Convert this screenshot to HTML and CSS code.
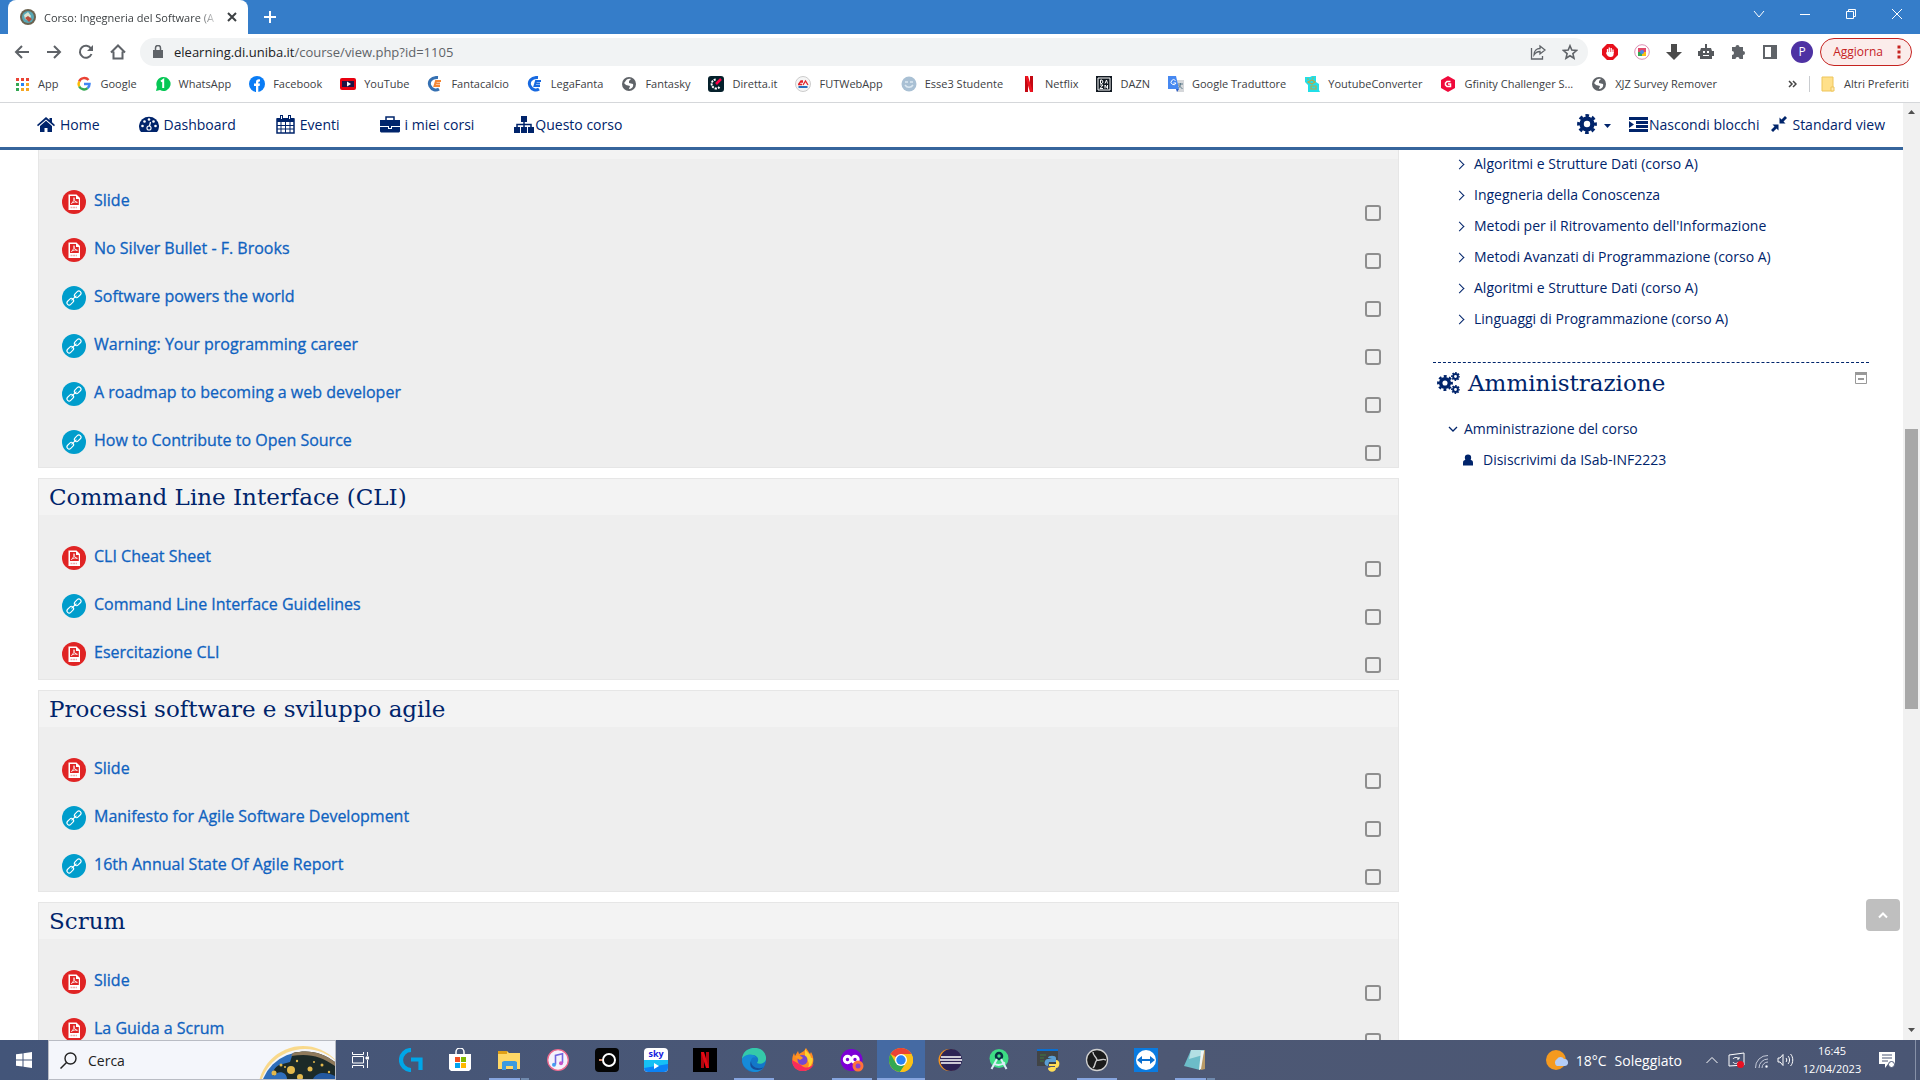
FILE: index.html
```html
<!DOCTYPE html>
<html lang="it">
<head>
<meta charset="utf-8">
<title>Corso: Ingegneria del Software (A)</title>
<link rel="stylesheet" href="styles.css">
</head>
<body>
<svg class="defs" aria-hidden="true">
  <symbol id="pdf" viewBox="0 0 24 24"><circle cx="12" cy="12" r="12" fill="#e02424"/><path d="M6.500 4.500h8L18 8v12H6.500z" fill="#fff"/><path d="M8 6h6v3h2.800v6H8z" fill="#e02424"/><path d="M12 7.500c.5 2-.8 4.500-2.600 6 1.500-1.400 4-1.800 6-1.200-1.800.2-3.400-1.800-3.500-4.500" fill="none" stroke="#fff" stroke-width=".8"/><path d="M8.500 17.500h2m.6 0h2m.6 0H15" stroke="#eaa" stroke-width="1.500"/></symbol>
  <symbol id="link" viewBox="0 0 24 24"><circle cx="12" cy="12" r="12" fill="#009dcc"/><g fill="none" stroke="#fff" stroke-width="1.100" transform="rotate(-45 12 12)"><rect x="3" y="9.800" width="7.500" height="4.400" rx="2.200"/><rect x="13.500" y="9.800" width="7.500" height="4.400" rx="2.200"/><path d="M8.500 12h7"/></g></symbol>
  <symbol id="gear" viewBox="0 0 20 20"><g fill="none" stroke="currentColor"><circle cx="10" cy="10" r="5.400" stroke-width="4.400"/><circle cx="10" cy="10" r="8.400" stroke-width="3" stroke-dasharray="3.600 2.997" stroke-dashoffset="1.800"/></g></symbol>
  <symbol id="globe" viewBox="0 0 16 16"><circle cx="8" cy="8" r="7" fill="#5f6368"/><path d="M4 6c1-3 4-4 6-3l-2 2v2l4 1c1 3-2 5-4 5l1-3-4-1-2-2z" fill="#fff"/></symbol>
  <symbol id="chrome" viewBox="0 0 24 24"><circle cx="12" cy="12" r="12" fill="#fbc116"/><path d="M12 12 1.600 6A12 12 0 0 1 22.400 6z" fill="#ea4335"/><path d="M1.600 6A12 12 0 0 0 11 24l6.200-9L12 12 6.800 15z" fill="#34a853"/><path d="M12 6h10.400A12 12 0 0 1 11 24l6-9z" fill="#fbc116"/><circle cx="12" cy="12" r="6" fill="#fff"/><circle cx="12" cy="12" r="4.700" fill="#2a83f5"/></symbol>
</svg>

<header class="browser">
  <div class="titlebar">
    <div class="tab">
      <svg width="16" height="16" viewBox="0 0 16 16"><circle cx="8" cy="8" r="8" fill="#6b6350"/><circle cx="8" cy="8" r="6" fill="#58a7b5"/><path d="M4 6l4-3 3 4-2 5-4-2z" fill="#d8e4d2"/><path d="M5 9l3-2 4 3-3 3z" fill="#b84b3a"/></svg>
      <span class="tab-title">Corso: Ingegneria del Software (A</span>
      <button class="plain" aria-label="Chiudi scheda"><svg width="10" height="10" viewBox="0 0 10 10"><path d="M1 1l8 8M9 1 1 9" stroke="#3c4043" stroke-width="2"/></svg></button>
    </div>
    <button class="plain new-tab" aria-label="Nuova scheda"><svg width="12" height="12" viewBox="0 0 12 12"><path d="M6 0v12M0 6h12" stroke="#fff" stroke-width="2"/></svg></button>
    <div class="window-buttons">
      <button class="plain" aria-label="Cerca schede"><svg width="12" height="12" viewBox="0 0 12 12"><path d="M1 3l5 6 5-6" class="thin"/></svg></button>
      <button class="plain" aria-label="Riduci"><svg width="12" height="12" viewBox="0 0 12 12"><path d="M1 6.500h10" class="thin"/></svg></button>
      <button class="plain" aria-label="Ripristina"><svg width="12" height="12" viewBox="0 0 12 12"><path d="M1.500 3.500h7v7h-7zM3.500 3V1.500h7v7H9" class="thin"/></svg></button>
      <button class="plain" aria-label="Chiudi"><svg width="12" height="12" viewBox="0 0 12 12"><path d="M1 1l10 10M11 1 1 11" class="thin"/></svg></button>
    </div>
  </div>
  <div class="toolbar">
    <div class="nav-buttons">
      <button class="plain" aria-label="Indietro"><svg width="16" height="16" viewBox="0 0 16 16"><path d="M15 8H2M8 2 2 8l6 6" class="tool"/></svg></button>
      <button class="plain" aria-label="Avanti"><svg width="16" height="16" viewBox="0 0 16 16"><path d="M1 8h13M8 2l6 6-6 6" class="tool"/></svg></button>
      <button class="plain" aria-label="Ricarica"><svg width="16" height="16" viewBox="0 0 16 16"><path d="M13.500 10A6 6 0 1 1 13 4.600" class="tool"/><path d="M15 1v6H9z" fill="#5f6368"/></svg></button>
      <button class="plain" aria-label="Pagina iniziale"><svg width="16" height="16" viewBox="0 0 16 16"><path d="M1 8.500 8 1.500l7 7M3.500 7.500v7h9v-7" class="tool"/></svg></button>
    </div>
    <label class="omnibox">
      <svg width="10" height="13" viewBox="0 0 10 13"><path d="M0 5h10v8H0z" fill="#5f6368"/><path d="M2.500 5V3a2.500 2.500 0 0 1 5 0v2" fill="none" stroke="#5f6368" stroke-width="1.500"/></svg>
      <span class="url">elearning.di.uniba.it<span class="path">/course/view.php?id=1105</span></span>
      <svg width="16" height="16" viewBox="0 0 16 16"><path d="M1.500 4v11h11v-3M10 2l5 4-5 4V7.500c-3 0-4.500 1-6 3.500 0-4 2.500-6.500 6-6.500z" fill="none" stroke="#5f6368" stroke-width="1.300"/></svg>
      <svg width="16" height="16" viewBox="0 0 16 16"><path d="M8 1.800l1.800 4.300 4.700.4-3.600 3.100 1.100 4.600-4-2.500-4 2.500 1.100-4.600-3.600-3.100 4.700-.4z" fill="none" stroke="#5f6368" stroke-width="1.600"/></svg>
    </label>
    <div class="extensions">
      <svg width="16" height="16" viewBox="0 0 16 16"><path d="M5 0h6l5 5v6l-5 5H5l-5-5V5z" fill="#e8101c"/><path d="M5.500 9V5M7.300 8V3.500M9.200 8V4M11 9V5.500" stroke="#fff" stroke-width="1.300"/><path d="M4.900 8h6.700v2c0 2-1 3-3 3-2.500 0-3.500-1.500-4.600-4z" fill="#fff"/></svg>
      <svg width="16" height="16" viewBox="0 0 16 16"><circle cx="8" cy="8" r="7.300" fill="#fff" stroke="#dc8fb4"/><path d="M4 4h8v8H4z" fill="#e04a6a"/><path d="M8 8 4 8v4h5z" fill="#36a852"/><path d="M8 8h4v4H8z" fill="#fbc116"/><circle cx="8" cy="8" r="2" fill="#498af0"/></svg>
      <svg width="16" height="16" viewBox="0 0 16 16"><path d="M5 0h6v8h5l-8 8-8-8h5z" fill="#4b4b4b"/></svg>
      <svg width="16" height="16" viewBox="0 0 16 16"><path d="M7 0h2v4h4l1 3h2v5h-2v3H2v-3H0V7h2l1-3h4z" fill="#55585c"/><path d="M5 7h2v2H5zm4 0h2v2H9zM5 11h6v1H5z" fill="#fff"/></svg>
      <svg width="16" height="16" viewBox="0 0 16 16"><path d="M2 3h3.500a2 2 0 1 1 4 0H13v4a2 2 0 1 1 0 4v4H9.500a2 2 0 1 0-4 0H2v-4a2 2 0 1 0 0-4z" fill="#5f6368"/></svg>
      <svg width="16" height="16" viewBox="0 0 16 16"><path d="M1 1h14v14H1zM3 3v10h6V3z" fill="#5f6368" fill-rule="evenodd"/></svg>
      <button class="plain avatar">P</button>
    </div>
    <button class="update">Aggiorna<svg width="4" height="14" viewBox="0 0 4 14"><path d="M.5.500h3v3h-3zm0 5h3v3h-3zm0 5h3v3h-3z" fill="#c5221f"/></svg></button>
  </div>
  <nav class="bookmarks">
    <a href="#"><svg class="ic" viewBox="0 0 16 16"><path d="M2 2h3v3H2zm5 0h3v3H7zm5 0h3v3h-3z" fill="#ea4335"/><path d="M2 7h3v3H2zM2 12h3v3H2z" fill="#34a853"/><path d="M7 7h3v3H7z" fill="#2483f5"/><path d="M12 7h3v3h-3zM7 12h3v3H7zm5 0h3v3h-3z" fill="#f5a623"/></svg>App</a>
    <a href="#"><svg class="ic" viewBox="0 0 16 16" fill="none" stroke-width="2.500"><path d="M12.500 4A5.500 5.500 0 0 0 3.200 5.500" stroke="#ea4335"/><path d="M3.200 5.500a5.500 5.500 0 0 0 0 5" stroke="#fbbc05"/><path d="M3.200 10.500a5.500 5.500 0 0 0 8.400 1.600" stroke="#34a853"/><path d="M11.600 12.100A5.500 5.500 0 0 0 13.500 8H8" stroke="#4285f4"/></svg>Google</a>
    <a href="#"><svg class="ic" viewBox="0 0 16 16"><path d="M8 1a7 7 0 1 1-3 13l-4 1 1-4A7 7 0 0 1 8 1" fill="#06c755"/><path d="M6 5.500 8.200 4v8" fill="none" stroke="#fff" stroke-width="2"/></svg>WhatsApp</a>
    <a href="#"><svg class="ic" viewBox="0 0 16 16"><circle cx="8" cy="8" r="8" fill="#0a7cf5"/><path d="M7 16v-6H5V7.500h2V6c0-2 1.500-3 4-2.600v2C9.500 5.300 9.300 5.800 9.300 7.500H11L10.600 10H9.300v6z" fill="#fff"/></svg>Facebook</a>
    <a href="#"><svg class="ic" viewBox="0 0 16 16"><rect y="2" width="16" height="12" rx="2" fill="#e8000f"/><path d="M2 5h12v6H2z" fill="#1c1445"/><path d="M7 5.500v5L11 8z" fill="#fff"/></svg>YouTube</a>
    <a href="#"><svg class="ic" viewBox="0 0 16 16" fill="none"><path d="M11 1.500C4 1 1 6 3 10s6 5 9 3" stroke="#3570b2" stroke-width="3"/><path d="M14 5H9L7.500 10H13M8 7.500h5" stroke="#f58634" stroke-width="2"/></svg>Fantacalcio</a>
    <a href="#"><svg class="ic" viewBox="0 0 16 16" fill="none" stroke="#1769e0"><path d="M11 1.500C4 1 1 6 3 10s6 5 9 3" stroke-width="3"/><path d="M14 5H9L7.500 10H13M8 7.500h5" stroke-width="2"/></svg>LegaFanta</a>
    <a href="#"><svg class="ic"><use href="#globe"/></svg>Fantasky</a>
    <a href="#"><svg class="ic" viewBox="0 0 16 16"><rect width="16" height="16" rx="3" fill="#05202b"/><path d="M11.500 11A4.500 4.500 0 1 1 8 3.500" fill="none" stroke="#fff" stroke-width="2" stroke-dasharray="2 1"/><path d="M8 8l5-5" stroke="#ff0046" stroke-width="2.500"/></svg>Diretta.it</a>
    <a href="#"><svg class="ic" viewBox="0 0 16 16"><circle cx="8" cy="8" r="7.500" fill="#f5f5f5" stroke="#ccc"/><path d="M3 8.500h4M5 6h3M3.500 8.500 6 5h2M8 9l2.500-4L13 9" fill="none" stroke="#e3232b" stroke-width="1.300"/><path d="M3.500 11h9" stroke="#2870c0" stroke-width="2"/></svg>FUTWebApp</a>
    <a href="#"><svg class="ic" viewBox="0 0 16 16"><circle cx="8" cy="8" r="7.500" fill="#a9c0d4"/><path d="M4 6h3m2 0h3M4 9c2 3 6 3 8 0" fill="none" stroke="#dce8f1" stroke-width="1.500"/></svg>Esse3 Studente</a>
    <a href="#"><svg class="ic" viewBox="0 0 16 16"><path d="M4 0h3v16H4zm5 0h3v16H9z" fill="#c40812"/><path d="M4 0h3l5 16H9z" fill="#ee1420"/></svg>Netflix</a>
    <a href="#"><svg class="ic" viewBox="0 0 16 16"><path d="M0 0h16v16H0z" fill="#101820"/><path d="M2 2h12v12H2z" fill="none" stroke="#fff"/><path d="M4.500 4v3.500H6L7 6 6 4zM9 7.500l1.500-3.500 1 3.500M4 9h3l-3 3.500h3M9 12.500V9l2.500 3.500V9" fill="none" stroke="#fff"/></svg>DAZN</a>
    <a href="#"><svg class="ic" viewBox="0 0 16 16"><path d="M7 4h9v12H9z" fill="#d5d7da"/><path d="M0 0h8l3 13H0z" fill="#4688f1"/><path d="M7.500 4.500A2.500 2.500 0 1 0 8 7H5.500" fill="none" stroke="#fff"/><path d="M10 8h5m-2.500-1v1c0 2-1 3-2 4m0-3 4 4" fill="none" stroke="#607d8b"/><path d="M8 13h3l-2 3z" fill="#2457c5"/></svg>Google Traduttore</a>
    <a href="#"><svg class="ic" viewBox="0 0 16 16"><path d="M1 1h5l2-1h4v6l3 2v6l1 2H4V9L1 6z" fill="#20dfe8"/><path d="M3 3h2m3-1h2M4 6l4-2 3 2-3 2zM7 10h5v3H7z" fill="none" stroke="#b8a848" stroke-width="1.200"/></svg>YoutubeConverter</a>
    <a href="#"><svg class="ic" viewBox="0 0 16 16"><path d="M8 0l7 4v8l-7 4-7-4V4z" fill="#f00a3c"/><path d="M10.500 5.500H7L5.500 7v2L7 10.500h3.500V8H8" fill="none" stroke="#fff" stroke-width="1.500"/></svg>Gfinity Challenger S...</a>
    <a href="#"><svg class="ic"><use href="#globe"/></svg>XJZ Survey Remover</a>
    <a href="#" class="more" aria-label="Altri preferiti nascosti"><svg width="9" height="8" viewBox="0 0 9 8"><path d="M1 1l3 3-3 3M5 1l3 3-3 3" fill="none" stroke="#444" stroke-width="1.500"/></svg></a>
    <a href="#" class="others"><svg class="ic" viewBox="0 0 16 16"><path d="M2 1h11v14H2z" fill="#ffe08a" stroke="#eec55a"/><path d="M11 11h3v4h-3z" fill="#ffe9ae" stroke="#eec55a"/></svg>Altri Preferiti</a>
  </nav>
</header>

<div class="viewport">
  <div class="site">
    <nav class="sitenav">
      <a href="#"><svg width="18" height="16" viewBox="0 0 18 16"><path d="M9 1 0 9l1 1.200L9 3.400l8 6.800L18 9l-3-2.700V2h-2.500v2z" fill="#00246b"/><path d="M9 4.800 3 10v6h4.500v-4h3v4H15v-6z" fill="#00246b"/></svg><span>Home</span></a>
      <a href="#" class="g1"><svg width="20" height="16" viewBox="0 0 20 16"><path d="M2 16A10 9.500 0 1 1 18 16z" fill="#00246b"/><g fill="#fff"><circle cx="3.500" cy="10" r="1.300"/><circle cx="5.500" cy="5.500" r="1.300"/><circle cx="10" cy="3.500" r="1.300"/><circle cx="14.500" cy="5.500" r="1.300"/><circle cx="16.500" cy="10" r="1.300"/><circle cx="10" cy="12" r="2.600"/></g><path d="M10 12l1.500-6" stroke="#fff" stroke-width="1.300"/><circle cx="10" cy="12" r="1.500" fill="#00246b"/></svg><span>Dashboard</span></a>
      <a href="#" class="g2"><svg width="19" height="19" viewBox="0 0 19 19"><path d="M1 4h17v14H1z" fill="#fff" stroke="#00246b" stroke-width="1.500"/><path d="M1 3h17v4H1zM4 0h3v5H4zm8 0h3v5h-3z" fill="#00246b"/><path d="M5 7v11m4.500-11v11M14 7v11M1 10.500h17M1 14h17" stroke="#00246b"/><path d="M5.500 1v3m8-3v3" stroke="#fff"/></svg><span>Eventi</span></a>
      <a href="#" class="g3"><svg width="20" height="17" viewBox="0 0 20 17"><path d="M0 4h20v6H0zm0 7h8v2h4v-2h8v4.500l-1 1H1l-1-1z" fill="#00246b"/><path d="M6 4V1h8v3" fill="none" stroke="#00246b" stroke-width="1.500"/><path d="M9 10h2v2H9z" fill="#00246b"/></svg><span>i miei corsi</span></a>
      <a href="#" class="g4"><svg width="20" height="17" viewBox="0 0 20 17"><path d="M7 0h6v6H7zM0 11h6v6H0zm7 0h6v6H7zm7 0h6v6h-6z" fill="#00246b"/><path d="M10 5v7M3 12V8.500h14V12" fill="none" stroke="#00246b" stroke-width="1.500"/></svg><span>Questo corso</span></a>
      <button class="plain settings" aria-label="Impostazioni"><svg width="20" height="20"><use href="#gear"/></svg><svg width="7" height="4" viewBox="0 0 7 4"><path d="M0 0h7L3.500 4z" fill="#00246b"/></svg></button>
      <a href="#" class="g5"><svg width="19" height="15" viewBox="0 0 19 15"><path d="M0 0h19v3H0zm7 4h12v3H7zm0 4h12v3H7zm-7 4h19v3H0zM0 4l5 3.500L0 11z" fill="#00246b"/></svg><span>Nascondi blocchi</span></a>
      <a href="#" class="g6"><svg width="16" height="16" viewBox="0 0 16 16"><path d="M8.500 7.500V1.500l2 2L14 0l2 2-3.500 3.500 2 2zM7.500 8.500v6l-2-2L2 16l-2-2 3.500-3.500-2-2z" fill="#00246b"/></svg><span>Standard view</span></a>
    </nav>
    <div class="content">
      <main>
        <section class="continued">
          <div class="cut-heading"></div>
          <ul>
            <li><svg><use href="#pdf"/></svg><a href="#">Slide</a><input type="checkbox" aria-label="Slide"></li>
            <li><svg><use href="#pdf"/></svg><a href="#">No Silver Bullet - F. Brooks</a><input type="checkbox" aria-label="No Silver Bullet - F. Brooks"></li>
            <li><svg><use href="#link"/></svg><a href="#">Software powers the world</a><input type="checkbox" aria-label="Software powers the world"></li>
            <li><svg><use href="#link"/></svg><a href="#">Warning: Your programming career</a><input type="checkbox" aria-label="Warning: Your programming career"></li>
            <li><svg><use href="#link"/></svg><a href="#">A roadmap to becoming a web developer</a><input type="checkbox" aria-label="A roadmap to becoming a web developer"></li>
            <li><svg><use href="#link"/></svg><a href="#">How to Contribute to Open Source</a><input type="checkbox" aria-label="How to Contribute to Open Source"></li>
          </ul>
        </section>
        <section>
          <h3>Command Line Interface (CLI)</h3>
          <ul>
            <li><svg><use href="#pdf"/></svg><a href="#">CLI Cheat Sheet</a><input type="checkbox" aria-label="CLI Cheat Sheet"></li>
            <li><svg><use href="#link"/></svg><a href="#">Command Line Interface Guidelines</a><input type="checkbox" aria-label="Command Line Interface Guidelines"></li>
            <li><svg><use href="#pdf"/></svg><a href="#">Esercitazione CLI</a><input type="checkbox" aria-label="Esercitazione CLI"></li>
          </ul>
        </section>
        <section>
          <h3>Processi software e sviluppo agile</h3>
          <ul>
            <li><svg><use href="#pdf"/></svg><a href="#">Slide</a><input type="checkbox" aria-label="Slide"></li>
            <li><svg><use href="#link"/></svg><a href="#">Manifesto for Agile Software Development</a><input type="checkbox" aria-label="Manifesto for Agile Software Development"></li>
            <li><svg><use href="#link"/></svg><a href="#">16th Annual State Of Agile Report</a><input type="checkbox" aria-label="16th Annual State Of Agile Report"></li>
          </ul>
        </section>
        <section>
          <h3>Scrum</h3>
          <ul>
            <li><svg><use href="#pdf"/></svg><a href="#">Slide</a><input type="checkbox" aria-label="Slide"></li>
            <li><svg><use href="#pdf"/></svg><a href="#">La Guida a Scrum</a><input type="checkbox" aria-label="La Guida a Scrum"></li>
          </ul>
        </section>
      </main>
      <aside>
        <ul class="courses">
          <li><a href="#">Algoritmi e Strutture Dati (corso A)</a></li>
          <li><a href="#">Ingegneria della Conoscenza</a></li>
          <li><a href="#">Metodi per il Ritrovamento dell'Informazione</a></li>
          <li><a href="#">Metodi Avanzati di Programmazione (corso A)</a></li>
          <li><a href="#">Algoritmi e Strutture Dati (corso A)</a></li>
          <li><a href="#">Linguaggi di Programmazione (corso A)</a></li>
        </ul>
        <div class="admin">
          <div class="admin-head">
            <svg width="23" height="22" viewBox="0 0 23 22" color="#00246b"><svg x="0" y="3" width="16" height="16"><use href="#gear"/></svg><svg x="14" y="0" width="9" height="9" viewBox="0 0 20 20"><use href="#gear" width="20" height="20"/></svg><svg x="14" y="13" width="9" height="9" viewBox="0 0 20 20"><use href="#gear" width="20" height="20"/></svg></svg>
            <h2>Amministrazione</h2>
            <button class="plain collapse" aria-label="Nascondi Amministrazione"><svg width="12" height="12" viewBox="0 0 12 12"><path d="M.5.500h11v11H.5z" fill="#fff" stroke="#999"/><path d="M0 0h12v3H0zM3 6h6v2H3z" fill="#999"/></svg></button>
          </div>
          <p class="node"><svg width="10" height="6" viewBox="0 0 10 6"><path d="M1 1l4 4 4-4" fill="none" stroke="#00246b" stroke-width="1.300"/></svg>Amministrazione del corso</p>
          <p class="leaf"><svg width="10" height="12" viewBox="0 0 11 12"><path d="M0 12V9c0-2 1-3 2.500-3h6C10 6 11 7 11 9v3z" fill="#00246b"/><circle cx="5.500" cy="3.500" r="3.500" fill="#00246b"/></svg><a href="#">Disiscrivimi da ISab-INF2223</a></p>
        </div>
      </aside>
    </div>
    <button class="to-top" aria-label="Torna su"><svg width="10" height="7" viewBox="0 0 10 7"><path d="M1 5.500l4-4 4 4" fill="none" stroke="#fff" stroke-width="2"/></svg></button>
  </div>
  <div class="scrollbar">
    <svg width="7" height="4" viewBox="0 0 7 4"><path d="M0 4h7L3.500 0z" fill="#505050"/></svg>
    <div class="track"><div class="thumb"></div></div>
    <svg width="7" height="4" viewBox="0 0 7 4"><path d="M0 0h7L3.500 4z" fill="#505050"/></svg>
  </div>
</div>

<footer class="taskbar">
  <button class="start" aria-label="Start"><svg width="16" height="16" viewBox="0 0 16 16"><path d="M0 2.300 6.500 1.400v6.100H0zM7.500 1.200 16 0v7.500H7.500zM0 8.500h6.500v6.100L0 13.700zM7.500 8.500H16V16l-8.500-1.200z" fill="#fff"/></svg></button>
  <div class="search">
    <svg width="17" height="17" viewBox="0 0 17 17"><circle cx="10.500" cy="6.500" r="5.500" fill="none" stroke="#222" stroke-width="1.400"/><path d="M6.500 10.500.500 16.500" stroke="#222" stroke-width="1.500"/></svg>
    <input type="text" placeholder="Cerca" aria-label="Cerca">
    <svg class="earth" width="78" height="38" viewBox="0 0 78 38"><circle cx="46" cy="50" r="45" fill="#f9d98c"/><circle cx="48" cy="54" r="46" fill="#f4f6fb"/><circle cx="46" cy="54" r="43" fill="#2f6ebb"/><path d="M36 12c16-4 30 0 42 9v17H30c0-5-5-8-10-6l-4 3c-1-4 2-9 6-11l11-3z" fill="#1c2a28"/><path d="M36 12c16-4 30 0 42 9v4C64 15 52 12 34 15z" fill="#8f7a5c"/><path d="M56 38c4-8 14-7 22-3v3z" fill="#2459a0"/><g fill="#e4b94c"><circle cx="34" cy="29" r="4"/><circle cx="53" cy="28" r="2.500"/><circle cx="43" cy="36" r="3"/><circle cx="17" cy="32" r="2.500"/><circle cx="24" cy="24" r="1.500"/><circle cx="40" cy="20" r="1.200"/><circle cx="65" cy="24" r="1.500"/><circle cx="72" cy="31" r="1.200"/><circle cx="57" cy="21" r="1"/><circle cx="28" cy="26" r="1"/></g></svg>
  </div>
  <div class="apps">
    <button aria-label="Visualizzazione attività"><svg width="17" height="16" viewBox="0 0 17 16" fill="none" stroke="#fff"><path d="M.5 0v2.500h11V0M.5 16v-2.500h11V16M.5 4.500h11v6.500H.5zM15.500 0v4m0 4v8"/><path d="M14 5h3v2h-3z" fill="#fff"/></svg></button>
    <button class="first-app" aria-label="Logitech G HUB"><svg class="app" viewBox="0 0 24 24"><path d="M12 2A10 10 0 1 0 12 22M12 11.500h9.500V22" fill="none" stroke="#00a6e8" stroke-width="4.200"/></svg></button>
    <button aria-label="Microsoft Store"><svg class="app" viewBox="0 0 24 24"><path d="M8 7V4a4 4 0 0 1 8 0v3" fill="none" stroke="#fff" stroke-width="1.500"/><path d="M1 6h22v15l-2 2H3l-2-2z" fill="#fff"/><path d="M7 9h5v5H7z" fill="#f25022"/><path d="M13 9h5v5h-5z" fill="#7fba00"/><path d="M7 15h5v5H7z" fill="#00a4ef"/><path d="M13 15h5v5h-5z" fill="#ffb900"/></svg></button>
    <button class="open multi" aria-label="Esplora file"><svg class="app" viewBox="0 0 24 24"><path d="M1 3h9l2 2h11v16H1z" fill="#ffd866"/><path d="M1 3h9v3H1z" fill="#e0a016"/><path d="M5 22v-8l2-1h11l2 1v8h-4v-4H9v4z" fill="#3c9be0"/></svg></button>
    <button aria-label="iTunes"><svg class="app" viewBox="0 0 24 24"><circle cx="12" cy="12" r="10.300" fill="#f4f2fb" stroke="#ef6a8f" stroke-width="1.300"/><path d="M9.500 16.500V7.500l7-1.700V15" fill="none" stroke="#7166e0" stroke-width="1.600"/><circle cx="8" cy="16.700" r="2" fill="#469df0"/><circle cx="15" cy="15.300" r="2" fill="#c755c8"/></svg></button>
    <button aria-label="Camera"><svg class="app" viewBox="0 0 24 24"><rect width="24" height="24" rx="4" fill="#050505"/><circle cx="14" cy="12" r="6" fill="none" stroke="#fff" stroke-width="2"/><path d="M4 11h3v2H4z" fill="#d99070"/></svg></button>
    <button aria-label="Sky Go"><svg class="app" viewBox="0 0 24 24"><rect width="24" height="24" rx="4" fill="#fff"/><path d="M0 12h24v8a4 4 0 0 1-4 4H4a4 4 0 0 1-4-4z" fill="#0b82f5"/><path d="M0 12h24v4L0 20z" fill="#16c1f5"/><path d="M10 15v6l5-3z" fill="#fff"/><text x="12" y="9" text-anchor="middle" class="sky">sky</text></svg></button>
    <button aria-label="Netflix"><svg class="app" viewBox="0 0 24 24"><path d="M0 0h24v24H0z" fill="#000"/><path d="M8 4h3v16H8zm5 0h3v16h-3z" fill="#b20710"/><path d="M8 4h3l5 16h-3z" fill="#e50914"/></svg></button>
    <button class="open" aria-label="Edge"><svg class="app" viewBox="0 0 24 24"><circle cx="12" cy="12" r="12" fill="#1377c9"/><path d="M0 11C1-3 22-4 24 9c1 6-6 8-9 6 3-4 0-8-5-8-4 0-8 1-10 4" fill="#35c9a9"/><path d="M0 12C1 6 12 4 14 10c-3-2-6 1-5 5 1 5 8 7 13 4-3 5-9 6-13 4C4 21 0 17 0 12" fill="#168bd8"/><path d="M9 13c0 6 7 9 13 6l-2 2c-4 2-9 1-11-2-1-2-1-4 0-6" fill="#164d9a"/></svg></button>
    <button aria-label="Firefox"><svg class="app" viewBox="0 0 24 24"><path d="M13 3l2-3c2 3 3 4 4 6l1-2c5 8 2 19-8 19C2 23-1 13 3 5l1 3 3-5 1 3z" fill="#ff8a22"/><path d="M14 0c0 4 6 5 6 10 4-2 1 12-8 13 7-2 8-9 2-13z" fill="#ffd12f"/><path d="M1 12c0 14 18 14 22 4-4 4-9 5-13 1z" fill="#f72c5b"/><circle cx="11.500" cy="12" r="5" fill="#7548cf"/><path d="M4 9c3-3 6-1 8 1l-3 2z" fill="#ff9b20"/></svg></button>
    <button class="open" aria-label="Firefox privato"><svg class="app" viewBox="0 0 24 24"><circle cx="11.500" cy="12" r="11" fill="#7d00d5"/><circle cx="7.500" cy="11.500" r="3.200" fill="none" stroke="#fff" stroke-width="3"/><circle cx="15" cy="11.500" r="3.200" fill="none" stroke="#fff" stroke-width="3"/><circle cx="18" cy="18" r="5.500" fill="#ff7139"/><circle cx="18" cy="18" r="2.500" fill="#8b3fd1"/></svg></button>
    <button class="open active" aria-label="Chrome"><svg class="app"><use href="#chrome"/></svg></button>
    <button aria-label="Eclipse"><svg class="app" viewBox="0 0 24 24"><circle cx="11.500" cy="12" r="11" fill="#f7941e"/><circle cx="13" cy="12" r="11" fill="#2c2255"/><path d="M3 9h20M2 12h22M3 15h20" stroke="#fff" stroke-width="1.600"/></svg></button>
    <button aria-label="Android Studio"><svg class="app" viewBox="0 0 24 24"><circle cx="12" cy="10.500" r="9.500" fill="#3ddc84"/><circle cx="12" cy="8" r="3" fill="none" stroke="#073042" stroke-width="2.500"/><path d="M10 11 4.500 21M14 11l5.500 10M7 15.500c3 2 7 2 11-1" fill="none" stroke="#dceef7" stroke-width="2"/></svg></button>
    <button aria-label="Python"><svg class="app" viewBox="0 0 24 24"><path d="M1 1h21v17H1z" fill="#414446"/><path d="M1 1h21v2H1z" fill="#0a6ed1"/><path d="M4 7h6M4 10h4M4 13h4" stroke="#3f7a3f"/><path d="M12 10c0-3 8-3 8 0v4h-7l-1 4c-5 0-4-7 0-7h4z" fill="#5a9fd4"/><path d="M15 19h4v-1h-6v-2h7v-4c5 0 4 8 0 8 0 5-8 5-8 0z" fill="#ffde57"/></svg></button>
    <button class="open" aria-label="OBS"><svg class="app" viewBox="0 0 24 24"><circle cx="12" cy="12" r="10.500" fill="#1b1b1b" stroke="#d0d0d0" stroke-width="1.300"/><path d="M12 12c-1-4-4-4-4-8m4 8c4 1 5-2 9 0m-9 0c-3 3-1 5-4 8" fill="none" stroke="#c8c8c8" stroke-width="1.400"/></svg></button>
    <button aria-label="TeamViewer"><svg class="app" viewBox="0 0 24 24"><path d="M0 0h24v24H0z" fill="#0a7be0"/><circle cx="12" cy="12" r="10" fill="#fff"/><path d="M3 12l5-4v3h8V8l5 4-5 4v-3H8v3z" fill="#0a6fd0"/></svg></button>
    <button class="open multi" aria-label="Blocco note"><svg class="app" viewBox="0 0 24 24"><path d="M8 2h14v19l-4 1z" fill="#b99a66"/><path d="M8 2h13l-4 20L1 18z" fill="#6cbcc8"/><path d="M8 2h13l-1 5-14 4z" fill="#b3e0e4"/><path d="M18 3h3l-3 18-2 1z" fill="#f3f6f5"/></svg></button>
  </div>
  <div class="tray">
    <button class="weather"><svg width="22" height="20" viewBox="0 0 22 20"><circle cx="10" cy="10" r="10" fill="#f59a1f"/><path d="M11 19a4 4 0 0 1 0-7 4 4 0 0 1 7 0 3.500 3.500 0 0 1 1 7z" fill="#b4cdf7" transform="translate(0 -3)"/></svg><span>18°C</span><span>Soleggiato</span></button>
    <svg width="12" height="8" viewBox="0 0 12 8"><path d="M.5 7 6 1.500 11.500 7" class="thin"/></svg>
    <svg class="t1" width="17" height="16" viewBox="0 0 17 16"><path d="M1 3l15-2v12L1 14z" class="thin"/><path d="M5 7c1-2 5-2 6 0m0-2v2H9M5 10c1 2 4 2 5 0" class="thin"/><circle cx="12.500" cy="12.500" r="3.500" fill="#e81123"/></svg>
    <svg class="t2" width="13" height="13" viewBox="0 0 13 13" fill="none" stroke="#c3c9d8"><path d="M.5 13A12 12 0 0 1 13 .500M4 13a9 9 0 0 1 9-9M7 13a6 6 0 0 1 6-6"/><circle cx="11.500" cy="11.500" r="1" fill="#fff"/></svg>
    <svg class="t3" width="17" height="14" viewBox="0 0 17 14"><path d="M1 5h2l3-3.500v11L3 9H1zM9 5c1 1 1 3 0 4m2-6c2 2 2 6 0 8m2.500-10c3 3 3 9 0 12" class="thin"/></svg>
    <div class="clock"><span>16:45</span><span>12/04/2023</span></div>
    <button class="notes" aria-label="Notifiche"><svg width="16" height="16" viewBox="0 0 16 16"><path d="M0 0h16v12H9l-3 4v-4H0z" fill="#fff"/><path d="M3 3h10M3 6h10M3 9h6" stroke="#4a5674"/><circle cx="12.500" cy="12.500" r="3" fill="#fff" stroke="#4a5674"/></svg></button>
    <div class="peek"></div>
  </div>
</footer>
</body>
</html>
```
FILE: styles.css
```css
* { box-sizing: border-box; }
body {
  margin: 0;
  height: 100vh;
  display: flex;
  flex-direction: column;
  overflow: hidden;
  font-family: "Open Sans", "Noto Sans", sans-serif;
  font-size: 14px;
  color: #00246b;
  background: #fff;
}
a { color: inherit; text-decoration: none; }
svg { display: block; flex: none; }
ul { list-style: none; margin: 0; padding: 0; }
button { font-family: inherit; cursor: pointer; }
.defs { position: absolute; width: 0; height: 0; }
.plain { border: 0; padding: 0; background: none; display: flex; align-items: center; justify-content: center; }
.thin { fill: none; stroke: #fff; stroke-width: 1; }
.tool { fill: none; stroke: #5f6368; stroke-width: 2; }
.ic { width: 16px; height: 16px; }

/* Browser frame */
.browser { flex: none; font-size: 12px; color: #3c4043; border-bottom: 1px solid #d5d7da; }
.titlebar { height: 34px; background: #357dc9; display: flex; align-items: center; padding-left: 8px; }
.tab {
  width: 240px; height: 34px; background: #fff; border-radius: 8px 8px 0 0;
  display: flex; align-items: center; gap: 8px; padding: 0 11px 0 12px;
}
.tab-title {
  flex: 1; min-width: 0; overflow: hidden; white-space: nowrap; font-size: 11px;
  mask-image: linear-gradient(to right, #000 88%, transparent);
}
.new-tab { margin-left: 16px; }
.window-buttons { margin-left: auto; display: flex; padding-bottom: 6px; }
.window-buttons .plain { width: 46px; height: 28px; }
.toolbar { height: 35px; display: flex; align-items: center; padding: 0 8px 0 14px; }
.nav-buttons { display: flex; gap: 16px; margin-right: 14px; }
.omnibox {
  flex: 1; height: 28px; border-radius: 14px; background: #f1f3f4;
  display: flex; align-items: center; gap: 16px; padding: 0 10px 0 13px;
}
.url { flex: 1; font-size: 13px; color: #202124; margin-left: -5px; }
.path { color: #5f6368; }
.extensions { display: flex; align-items: center; gap: 16px; margin: 0 7px 0 14px; }
.avatar { width: 22px; height: 22px; border-radius: 50%; background: #4e32a3; color: #fff; font-size: 12px; margin-left: -3px; }
.update {
  height: 28px; border: 1px solid #c5221f; border-radius: 14px; background: #fbeceb; color: #c5221f;
  font-size: 12px; padding: 0 10px 0 12px; display: flex; align-items: center; gap: 14px;
}
.bookmarks { height: 33px; display: flex; align-items: center; gap: 18px; padding: 0 11px 4px 14px; font-size: 11px; white-space: nowrap; }
.bookmarks a { display: flex; align-items: center; gap: 8px; }
.bookmarks .more { margin-left: auto; }
.bookmarks .others { border-left: 1px solid #c9ccd0; padding-left: 10px; margin-left: -6px; }

/* Page */
.viewport { flex: 1; min-height: 0; display: flex; }
.site { flex: 1; min-width: 0; display: flex; flex-direction: column; position: relative; overflow: hidden; }
.sitenav { flex: none; height: 47px; border-bottom: 3px solid #36659c; display: flex; align-items: center; padding: 0 18px 2px 37px; white-space: nowrap; }
.sitenav a { display: flex; align-items: center; gap: 5px; }
.sitenav .g1 { margin-left: 39px; }
.sitenav .g2, .sitenav .g3, .sitenav .g4 { margin-left: 40px; }
.sitenav .g4, .sitenav .g5 { gap: 1px; }
.settings { margin-left: auto; gap: 7px; color: #00246b; }
.settings svg:last-child { margin-top: 4px; }
.sitenav .g5 { margin-left: 18px; }
.sitenav .g6 { margin-left: 12px; }
.content { display: grid; grid-template-columns: minmax(0, 1fr) 436px; gap: 34px; padding: 0 34px 0 38px; }
section { border: 1px solid #e6e6e6; background: #eee; margin-bottom: 10px; }
.continued { border-top: 0; }
.cut-heading { height: 9px; background: #f3f3f3; }
h3, h2 { margin: 0; font-family: "DejaVu Serif", serif; font-weight: 400; font-size: 23px; color: #00246b; }
h3 { height: 36px; line-height: 37px; padding-left: 10px; background: #f3f3f3; }
main ul { padding: 19px 17px 1px 23px; }
main li { height: 48px; display: flex; align-items: center; gap: 8px; }
main li svg { width: 24px; height: 24px; }
main li a { color: #0f62c0; font-size: 16px; flex: 1; padding-bottom: 4px; -webkit-text-stroke: 0.3px #0f62c0; }
main input {
  appearance: none; width: 16px; height: 16px; margin: 0 0 5px; align-self: flex-end;
  border: 2px solid #8e8e8e; border-radius: 3px; background: #efefef;
}
.courses { padding-bottom: 28px; }
.courses li { height: 31px; line-height: 28px; padding-left: 41px; position: relative; }
.courses li::before {
  content: ""; position: absolute; left: 23px; top: 11px; width: 6px; height: 6px;
  border: solid #00246b; border-width: 1px 1px 0 0; transform: rotate(45deg);
}
.admin { border-top: 1px dashed #00246b; margin-top: -2px; }
.admin-head { display: flex; align-items: center; gap: 8px; padding-left: 4px; height: 40px; }
.collapse { margin: 0 2px 10px auto; }
.node, .leaf { margin: 0; height: 31px; display: flex; align-items: center; }
.node { margin-top: 10px; padding-left: 15px; gap: 6px; }
.leaf { padding-left: 30px; gap: 10px; }
.to-top {
  position: absolute; right: 3px; bottom: 109px; width: 34px; height: 32px; border: 0; border-radius: 4px;
  background: #bfbfbf; display: flex; align-items: center; justify-content: center;
}
.scrollbar { width: 17px; background: #f1f1f1; display: flex; flex-direction: column; align-items: center; padding: 7px 0 8px; }
.track { flex: 1; align-self: stretch; padding: 0 2px; }
.thumb { margin-top: 315px; height: 280px; background: #a8a8a8; }

/* Taskbar */
.taskbar { flex: none; height: 40px; display: flex; background: linear-gradient(90deg, #435579, #4d5874 60%, #4a5674); color: #fff; }
.taskbar button { border: 0; background: none; color: inherit; display: flex; align-items: center; justify-content: center; padding: 0; }
.taskbar .start { width: 48px; }
.search { width: 288px; background: #f4f6fb; border: 1px solid #b9bcc4; display: flex; align-items: center; padding-left: 11px; overflow: hidden; }
.search input { flex: 1; min-width: 0; border: 0; background: none; outline: 0; font: 14px "Open Sans", sans-serif; color: #222; padding: 0 0 0 11px; }
.search input::placeholder { color: #222; opacity: 1; }
.apps { display: flex; gap: 1px; }
.apps button { width: 48px; height: 40px; }
.apps .first-app { margin-left: 2px; }
.app { width: 24px; height: 24px; }
.apps .open { background: linear-gradient(#86a5df, #86a5df) center bottom / 40px 2px no-repeat; }
.apps .multi { background: linear-gradient(90deg, #86a5df 31px, #4d5874 31px, #4d5874 32px, #6f89ad 32px) center bottom / 40px 2px no-repeat; }
.apps .active { background: linear-gradient(#86a5df, #86a5df) center bottom / 100% 2px no-repeat, #456aa3; }
.sky { font: bold 9px "Open Sans", sans-serif; fill: #1522e0; }
.tray { margin-left: auto; display: flex; align-items: center; white-space: nowrap; }
.tray .weather { font-size: 14px; gap: 8px; margin-right: 24px; }
.t1 { margin-left: 10px; }
.t2 { margin-left: 10px; margin-top: 3px; }
.t3 { margin-left: 9px; }
.clock { width: 58px; margin-left: 9px; display: flex; flex-direction: column; align-items: center; font-size: 11px; line-height: 18px; }
.tray .notes { margin-left: 18px; margin-right: 20px; }
.peek { width: 5px; align-self: stretch; border-left: 1px solid #8791a8; }
```
